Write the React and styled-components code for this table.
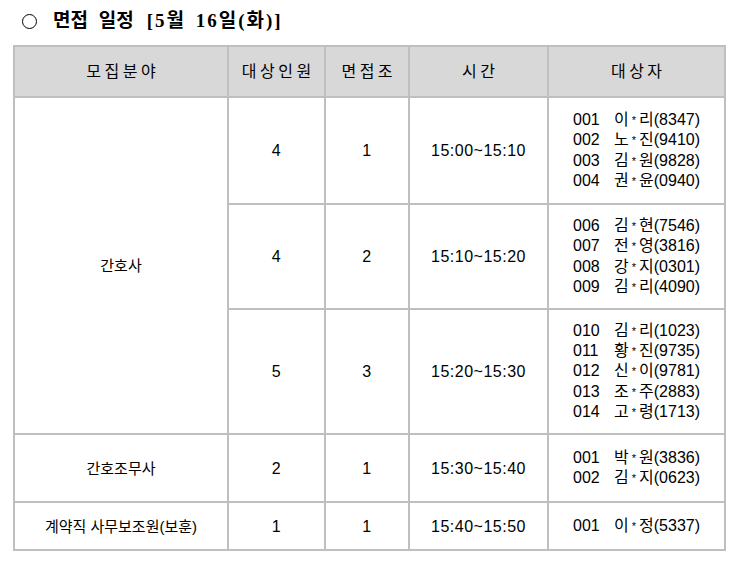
import React from "react";
import styled, { createGlobalStyle } from "styled-components";

const Global = createGlobalStyle`
  html, body { margin: 0; padding: 0; background: #ffffff; }
  body { font-family: "Liberation Sans", "Noto Sans CJK KR", sans-serif; color: #000; }
`;

const Page = styled.div`
  width: 737px;
  height: 567px;
  padding: 9px 0 0 13px;
  box-sizing: border-box;
`;

const Title = styled.h1`
  margin: 0 0 0 9px;
  font-family: "Liberation Serif", "Noto Sans CJK KR", serif;
  font-weight: bold;
  font-size: 19px;
  line-height: 22px;
  height: 24px;
  display: flex;
  align-items: center;
  gap: 16px;
  word-spacing: 6px;
`;

const DateText = styled.span`
  margin-left: 13px;
  letter-spacing: 2px;
  word-spacing: 3px;
`;

const Circle = styled.span`
  display: inline-block;
  width: 15px;
  height: 15px;
  border: 1.8px solid #000;
  border-radius: 50%;
  box-sizing: border-box;
`;

const Table = styled.table`
  margin-top: 12px;
  border-collapse: collapse;
  table-layout: fixed;
  width: 711px;
  font-size: 15px;
  line-height: 19px;
`;

const HeadCell = styled.th`
  background: #d8d8d8;
  border: 2px solid #bfbfbf;
  font-weight: normal;
  font-size: 16px;
  height: 49px;
  padding: 0 0 0 3.5px;
  text-align: center;
  vertical-align: middle;
  letter-spacing: 3.5px;
`;

const Cell = styled.td`
  border: 2px solid #bfbfbf;
  padding: 0;
  text-align: center;
  vertical-align: middle;
  font-size: ${(p) => (p.$num ? "16px" : "15px")};
  letter-spacing: ${(p) => (p.$num ? "0.5px" : "0")};
`;

const Row = styled.tr`
  height: ${(p) => p.$h}px;
`;

const Names = styled.div`
  display: inline-block;
  text-align: left;
  font-size: 16px;
  line-height: 19.3px;
  letter-spacing: 0;
`;

const Num = styled.span`
  display: inline-block;
  width: 41px;
`;

const Star = styled.span`
  display: inline-block;
  font-size: 11px;
  vertical-align: 1px;
  margin: 0 3px;
`;

const groups = [
  { n: 4, g: 1, t: "15:00~15:10", h: 107, people: [["001", "이", "리", "8347"], ["002", "노", "진", "9410"], ["003", "김", "원", "9828"], ["004", "권", "윤", "0940"]] },
  { n: 4, g: 2, t: "15:10~15:20", h: 105, people: [["006", "김", "현", "7546"], ["007", "전", "영", "3816"], ["008", "강", "지", "0301"], ["009", "김", "리", "4090"]] },
  { n: 5, g: 3, t: "15:20~15:30", h: 125, people: [["010", "김", "리", "1023"], ["011", "황", "진", "9735"], ["012", "신", "이", "9781"], ["013", "조", "주", "2883"], ["014", "고", "령", "1713"]] },
];

const NameList = ({ people }) => (
  <Names>
    {people.map(([num, a, b, code]) => (
      <div key={num}>
        <Num>{num}</Num>
        {a}
        <Star>*</Star>
        {b}({code})
      </div>
    ))}
  </Names>
);

export default function App() {
  return (
    <Page>
      <Global />
      <Title>
        <Circle />
        <span>
          면접 일정<DateText>[5월 16일(화)]</DateText>
        </span>
      </Title>
      <Table>
        <colgroup>
          <col style={{ width: 214 }} />
          <col style={{ width: 97 }} />
          <col style={{ width: 84 }} />
          <col style={{ width: 139 }} />
          <col style={{ width: 177 }} />
        </colgroup>
        <thead>
          <tr>
            <HeadCell>모집분야</HeadCell>
            <HeadCell>대상인원</HeadCell>
            <HeadCell>면접조</HeadCell>
            <HeadCell>시간</HeadCell>
            <HeadCell>대상자</HeadCell>
          </tr>
        </thead>
        <tbody>
          {groups.map((gr, i) => (
            <Row key={gr.g} $h={gr.h}>
              {i === 0 && <Cell rowSpan={3}>간호사</Cell>}
              <Cell $num>{gr.n}</Cell>
              <Cell $num>{gr.g}</Cell>
              <Cell $num>{gr.t}</Cell>
              <Cell>
                <NameList people={gr.people} />
              </Cell>
            </Row>
          ))}
          <Row $h={68}>
            <Cell>간호조무사</Cell>
            <Cell $num>2</Cell>
            <Cell $num>1</Cell>
            <Cell $num>15:30~15:40</Cell>
            <Cell>
              <NameList people={[["001", "박", "원", "3836"], ["002", "김", "지", "0623"]]} />
            </Cell>
          </Row>
          <Row $h={48}>
            <Cell>계약직 사무보조원(보훈)</Cell>
            <Cell $num>1</Cell>
            <Cell $num>1</Cell>
            <Cell $num>15:40~15:50</Cell>
            <Cell>
              <NameList people={[["001", "이", "정", "5337"]]} />
            </Cell>
          </Row>
        </tbody>
      </Table>
    </Page>
  );
}
